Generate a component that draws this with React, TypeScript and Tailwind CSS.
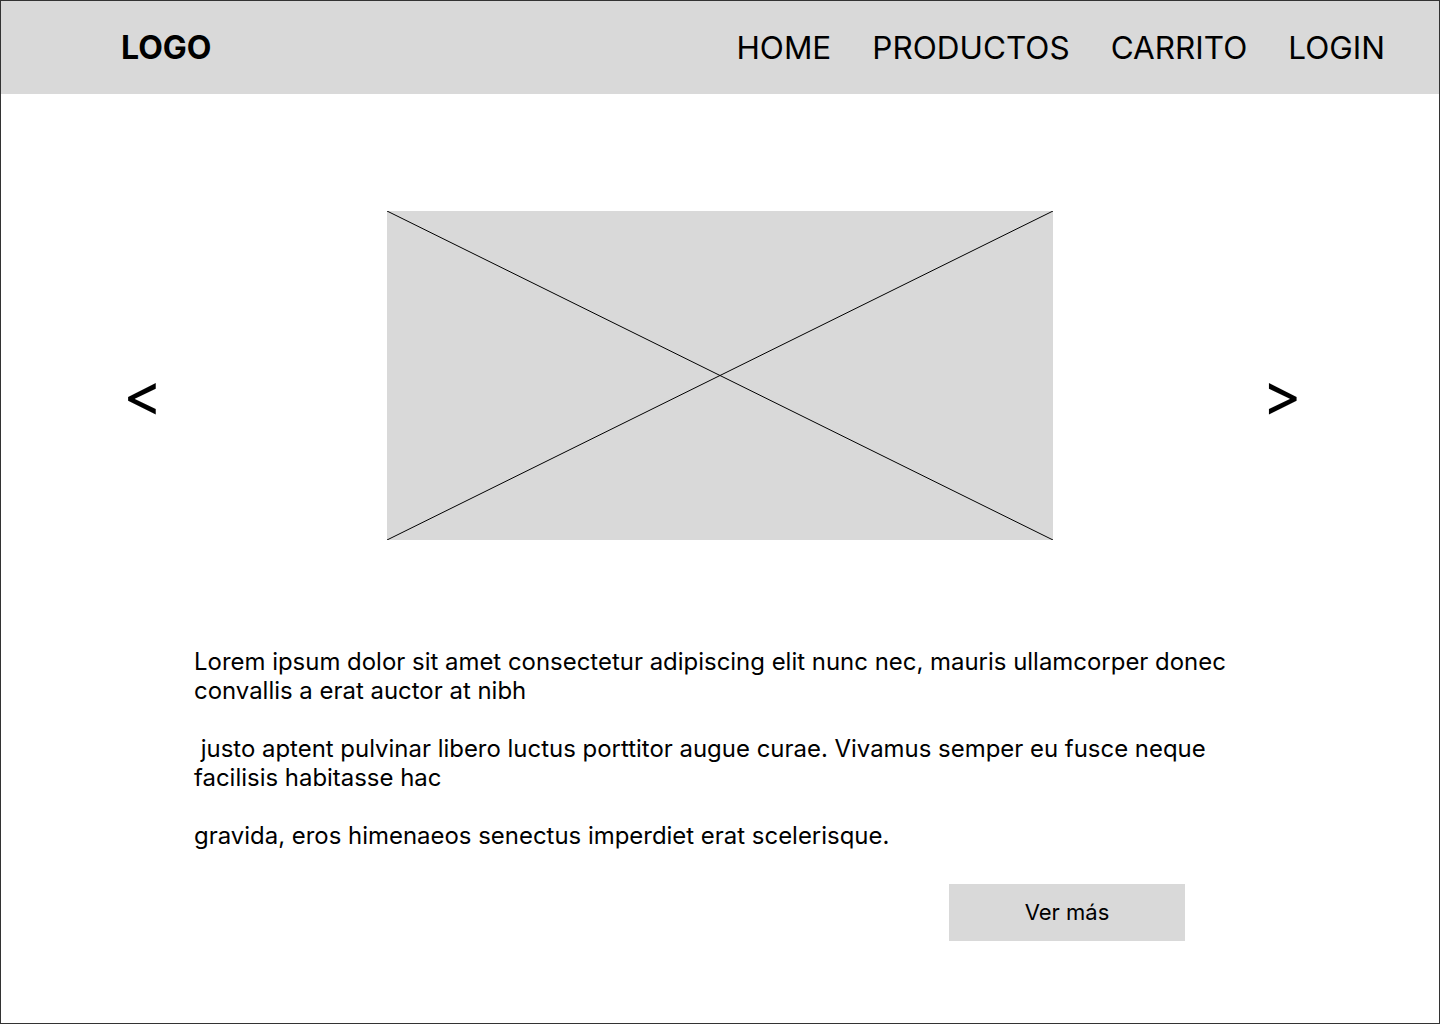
export default function App() {
  return (
    <div
      className="w-[1440px] h-[1024px] border border-[#333333] bg-white flex flex-col overflow-hidden text-black"
      style={{ fontFamily: "Inter, 'Noto Sans', sans-serif" }}
    >
      <header className="h-[93px] bg-[#d9d9d9] flex items-center justify-between pl-[120px] pr-[54px] shrink-0">
        <div className="text-[32px] font-bold leading-none">LOGO</div>
        <nav className="flex items-center gap-[41px] text-[31.5px] leading-none font-normal">
          <span>HOME</span>
          <span>PRODUCTOS</span>
          <span>CARRITO</span>
          <span>LOGIN</span>
        </nav>
      </header>

      <div className="flex items-center mt-[117px] h-[329px]">
        <div className="w-[386px] pl-[122px] pt-[36px] text-[60px] leading-none">&lt;</div>
        <div className="w-[666px] h-[329px] bg-[#d9d9d9] shrink-0">
          <svg width="666" height="329" viewBox="0 0 666 329" className="block">
            <line x1="0" y1="0" x2="666" y2="329" stroke="#000" strokeWidth="1" />
            <line x1="666" y1="0" x2="0" y2="329" stroke="#000" strokeWidth="1" />
          </svg>
        </div>
        <div className="pl-[209px] pt-[36px] text-[60px] leading-none">&gt;</div>
      </div>

      <div className="mt-[107px] ml-[193px] w-[1052px] text-[23.95px] leading-[29px]">
        <p>Lorem ipsum dolor sit amet consectetur adipiscing elit nunc nec, mauris ullamcorper donec convallis a erat auctor at nibh</p>
        <p className="mt-[29px] whitespace-pre-wrap">{" justo aptent pulvinar libero luctus porttitor augue curae. Vivamus semper eu fusce neque facilisis habitasse hac"}</p>
        <p className="mt-[29px]">gravida, eros himenaeos senectus imperdiet erat scelerisque.</p>
      </div>

      <div className="flex mt-[34px] pl-[948px]">
        <button className="w-[236px] h-[57px] bg-[#d9d9d9] flex items-center justify-center text-[22px]">
          Ver más
        </button>
      </div>
    </div>
  );
}
